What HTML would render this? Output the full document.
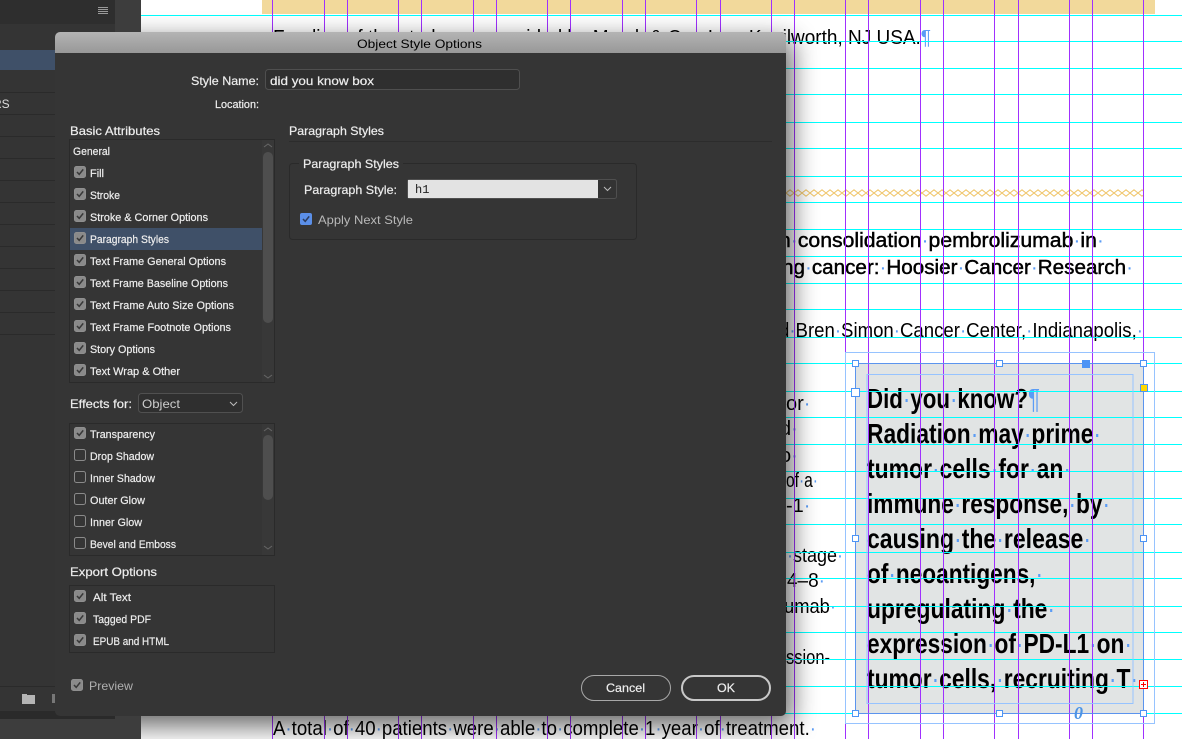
<!DOCTYPE html>
<html><head><meta charset="utf-8"><title>Object Style Options</title>
<style>
html,body{margin:0;padding:0;width:1182px;height:739px;overflow:hidden;background:#fff}
svg{display:block}
text{font-family:"Liberation Sans",sans-serif}
.d text{fill:#ededed;font-size:11px;stroke:#ededed;stroke-width:.2px}
.h{font-size:12px!important}
.dot{fill:#5b9cf5;stroke:none;font-weight:normal}
.doc{fill:#000;font-size:20px}
.hd{fill:#000;font-size:28px;font-weight:bold}
.sub{fill:#000;font-size:20px;stroke:#000;stroke-width:.45px}
</style></head><body>
<svg width="1182" height="739" viewBox="0 0 1182 739" xmlns="http://www.w3.org/2000/svg">
<defs>
<linearGradient id="tb" x1="0" y1="0" x2="0" y2="1"><stop offset="0" stop-color="#b4b4b4"/><stop offset="1" stop-color="#989898"/></linearGradient>
<filter id="bl" x="-20%" y="-20%" width="140%" height="140%"><feGaussianBlur stdDeviation="13"/></filter>
<pattern id="dm" x="786" y="189" width="8" height="8" patternUnits="userSpaceOnUse"><path d="M0 4L4 .8L8 4L4 7.2Z" fill="none" stroke="#efc468" stroke-width="1"/></pattern>
<g id="ck"><rect x=".5" y=".5" width="11" height="11" rx="2" fill="#8a8a8a" stroke="#8f8f8f"/><path d="M3 6l2.2 2.4L9.2 3.400" fill="none" stroke="#383838" stroke-width="1.5"/></g>
<g id="un"><rect x=".5" y=".5" width="11" height="11" rx="2" fill="#353535" stroke="#8a8a8a"/></g>
<clipPath id="pg"><rect x="141" y="0" width="1041" height="739"/></clipPath>
</defs>

<!-- app background -->
<rect width="1182" height="739" fill="#fff"/>
<rect x="0" y="0" width="141" height="739" fill="#3d3d3d"/>
<rect x="0" y="0" width="115" height="24" fill="#2e2e2e"/>
<rect x="0" y="24" width="115" height="688" fill="#343434"/>
<g fill="#9a9a9a"><rect x="98" y="7" width="10" height="1"/><rect x="98" y="9" width="10" height="1"/><rect x="98" y="11" width="10" height="1"/><rect x="98" y="13" width="10" height="1"/></g>
<rect x="0" y="50" width="115" height="20" fill="#3f5068"/>
<g fill="#2a2a2a"><rect y="92" width="115" height="1"/><rect y="114" width="115" height="1"/><rect y="136" width="115" height="1"/><rect y="158" width="115" height="1"/><rect y="180" width="115" height="1"/><rect y="202" width="115" height="1"/><rect y="224" width="115" height="1"/><rect y="246" width="115" height="1"/><rect y="268" width="115" height="1"/><rect y="290" width="115" height="1"/><rect y="312" width="115" height="1"/><rect y="334" width="115" height="1"/></g>
<text x="-7" y="108" font-size="12" fill="#ddd">RS</text>
<rect y="686" width="115" height="1" fill="#2a2a2a"/>
<rect y="711" width="115" height="8" fill="#2a2a2a"/>
<path d="M22 695h13v9H22z" fill="#b5b5b5"/>
<rect x="22" y="694" width="5" height="1" fill="#b5b5b5"/>
<path d="M52 694h4v9h-4z" fill="#777"/>

<!-- page -->
<rect x="262" y="0" width="893" height="14" fill="#f2d99b"/>
<g class="doc">
<text class="doc" x="273" y="44" textLength="658" lengthAdjust="spacingAndGlyphs">Funding of the study was provided by Merck &amp; Co., Inc., Kenilworth, NJ USA.<tspan fill="#5b9cf5">¶</tspan></text>
<rect x="786" y="189" width="357" height="8" fill="url(#dm)"/>
<text class="sub" x="779" y="247" textLength="325" lengthAdjust="spacingAndGlyphs">n<tspan class="dot">·</tspan>consolidation<tspan class="dot">·</tspan>pembrolizumab<tspan class="dot">·</tspan>in<tspan class="dot">·</tspan></text>
<text class="sub" x="782" y="274" textLength="351" lengthAdjust="spacingAndGlyphs">ng<tspan class="dot">·</tspan>cancer:<tspan class="dot">·</tspan>Hoosier<tspan class="dot">·</tspan>Cancer<tspan class="dot">·</tspan>Research<tspan class="dot">·</tspan></text>
<text class="doc" x="779" y="337" textLength="364" lengthAdjust="spacingAndGlyphs">d<tspan class="dot">·</tspan>Bren<tspan class="dot">·</tspan>Simon<tspan class="dot">·</tspan>Cancer<tspan class="dot">·</tspan>Center,<tspan class="dot">·</tspan>Indianapolis,<tspan class="dot">·</tspan></text>
<text class="doc" x="786" y="410">or<tspan class="dot">·</tspan></text>
<text class="doc" x="780" y="435">d<tspan class="dot">·</tspan></text>
<text class="doc" x="780" y="462">o<tspan class="dot">·</tspan></text>
<text class="doc" x="786" y="487" textLength="32" lengthAdjust="spacingAndGlyphs">of<tspan class="dot">·</tspan>a<tspan class="dot">·</tspan></text>
<text class="doc" x="786" y="512">-1<tspan class="dot">·</tspan></text>
<text class="doc" x="787" y="562" textLength="56" lengthAdjust="spacingAndGlyphs"><tspan class="dot">·</tspan>stage<tspan class="dot">·</tspan></text>
<text class="doc" x="787" y="587" textLength="38" lengthAdjust="spacingAndGlyphs">4–8<tspan class="dot">·</tspan></text>
<text class="doc" x="784" y="613" textLength="52" lengthAdjust="spacingAndGlyphs">umab<tspan class="dot">·</tspan></text>
<text class="doc" x="786" y="664" textLength="44" lengthAdjust="spacingAndGlyphs">ssion-</text>
<text class="doc" x="273" y="735" textLength="543" lengthAdjust="spacingAndGlyphs">A<tspan class="dot">·</tspan>total<tspan class="dot">·</tspan>of<tspan class="dot">·</tspan>40<tspan class="dot">·</tspan>patients<tspan class="dot">·</tspan>were<tspan class="dot">·</tspan>able<tspan class="dot">·</tspan>to<tspan class="dot">·</tspan>complete<tspan class="dot">·</tspan>1<tspan class="dot">·</tspan>year<tspan class="dot">·</tspan>of<tspan class="dot">·</tspan>treatment.<tspan class="dot">·</tspan></text>
</g>

<!-- text frame -->
<rect x="855" y="363.5" width="288" height="350" fill="#e1e4e4"/>
<text class="hd" x="867" y="408" textLength="173" lengthAdjust="spacingAndGlyphs">Did<tspan class="dot">·</tspan>you<tspan class="dot">·</tspan>know?<tspan class="dot">¶</tspan></text>
<text class="hd" x="867" y="443" textLength="234" lengthAdjust="spacingAndGlyphs">Radiation<tspan class="dot">·</tspan>may<tspan class="dot">·</tspan>prime<tspan class="dot">·</tspan></text>
<text class="hd" x="867" y="478" textLength="204" lengthAdjust="spacingAndGlyphs">tumor<tspan class="dot">·</tspan>cells<tspan class="dot">·</tspan>for<tspan class="dot">·</tspan>an<tspan class="dot">·</tspan></text>
<text class="hd" x="867" y="513" textLength="243" lengthAdjust="spacingAndGlyphs">immune<tspan class="dot">·</tspan>response,<tspan class="dot">·</tspan>by<tspan class="dot">·</tspan></text>
<text class="hd" x="867" y="548" textLength="224" lengthAdjust="spacingAndGlyphs">causing<tspan class="dot">·</tspan>the<tspan class="dot">·</tspan>release<tspan class="dot">·</tspan></text>
<text class="hd" x="867" y="583" textLength="176" lengthAdjust="spacingAndGlyphs">of<tspan class="dot">·</tspan>neoantigens,<tspan class="dot">·</tspan></text>
<text class="hd" x="867" y="618" textLength="188" lengthAdjust="spacingAndGlyphs">upregulating<tspan class="dot">·</tspan>the<tspan class="dot">·</tspan></text>
<text class="hd" x="867" y="653" textLength="265" lengthAdjust="spacingAndGlyphs">expression<tspan class="dot">·</tspan>of<tspan class="dot">·</tspan>PD-L1<tspan class="dot">·</tspan>on<tspan class="dot">·</tspan></text>
<text class="hd" x="867" y="688" textLength="271" lengthAdjust="spacingAndGlyphs">tumor<tspan class="dot">·</tspan>cells,<tspan class="dot">·</tspan>recruiting<tspan class="dot">·</tspan>T<tspan class="dot">·</tspan></text>

<!-- guides -->
<g clip-path="url(#pg)" fill="#0ff">
<rect x="141" y="15" width="1041" height="1"/><rect x="141" y="41" width="1041" height="1"/><rect x="141" y="68" width="1041" height="1"/><rect x="141" y="94" width="1041" height="1"/><rect x="141" y="122" width="1041" height="1"/><rect x="141" y="148" width="1041" height="1"/><rect x="141" y="176" width="1041" height="1"/><rect x="141" y="202" width="1041" height="1"/><rect x="141" y="229" width="1041" height="1"/><rect x="141" y="256" width="1041" height="1"/><rect x="141" y="283" width="1041" height="1"/><rect x="141" y="309" width="1041" height="1"/><rect x="141" y="337" width="1041" height="1"/><rect x="141" y="363" width="1041" height="1"/><rect x="141" y="391" width="1041" height="1"/><rect x="141" y="417" width="1041" height="1"/><rect x="141" y="444" width="1041" height="1"/><rect x="141" y="471" width="1041" height="1"/><rect x="141" y="498" width="1041" height="1"/><rect x="141" y="524" width="1041" height="1"/><rect x="141" y="552" width="1041" height="1"/><rect x="141" y="578" width="1041" height="1"/><rect x="141" y="606" width="1041" height="1"/><rect x="141" y="632" width="1041" height="1"/><rect x="141" y="659" width="1041" height="1"/><rect x="141" y="686" width="1041" height="1"/><rect x="141" y="713" width="1041" height="1"/>
</g>
<g fill="#a030ff">
<rect x="272" y="0" width="1" height="739"/><rect x="324" y="0" width="1" height="739"/><rect x="347" y="0" width="1" height="739"/><rect x="398" y="0" width="1" height="739"/><rect x="421" y="0" width="1" height="739"/><rect x="473" y="0" width="1" height="739"/><rect x="496" y="0" width="1" height="739"/><rect x="547" y="0" width="1" height="739"/><rect x="570" y="0" width="1" height="739"/><rect x="622" y="0" width="1" height="739"/><rect x="645" y="0" width="1" height="739"/><rect x="696" y="0" width="1" height="739"/><rect x="720" y="0" width="1" height="739"/><rect x="771" y="0" width="1" height="739"/><rect x="794" y="0" width="1" height="739"/><rect x="845" y="0" width="1" height="739"/><rect x="868" y="0" width="1" height="739"/><rect x="920" y="0" width="1" height="739"/><rect x="943" y="0" width="1" height="739"/><rect x="994" y="0" width="1" height="739"/><rect x="1018" y="0" width="1" height="739"/><rect x="1069" y="0" width="1" height="739"/><rect x="1092" y="0" width="1" height="739"/><rect x="1143" y="0" width="1" height="739"/>
</g>

<!-- selection -->
<g fill="none">
<rect x="845.5" y="352.5" width="309" height="371" stroke="#96c3ff"/>
<rect x="855.5" y="363.5" width="288" height="350" stroke="#5b94ee"/>
<rect x="867" y="374.5" width="266" height="329" stroke="#96c3ff"/>
</g>
<g fill="#fff" stroke="#4d94f5">
<rect x="852.5" y="360.5" width="6" height="6"/><rect x="996.5" y="360.5" width="6" height="6"/><rect x="1140.5" y="360.5" width="6" height="6"/>
<rect x="851.5" y="388.5" width="8" height="8"/>
<rect x="852.5" y="535.5" width="6" height="6"/><rect x="1140.5" y="535.5" width="6" height="6"/>
<rect x="852.5" y="710.5" width="6" height="6"/><rect x="996.5" y="710.5" width="6" height="6"/><rect x="1140.5" y="710.5" width="6" height="6"/>
</g>
<rect x="1082" y="360" width="8" height="8" fill="#4d94f5"/>
<rect x="1140.5" y="384.5" width="7" height="7" fill="#ffd800" stroke="#4d94f5"/>
<rect x="1139.5" y="680.5" width="8" height="8" fill="#fff" stroke="#f00"/>
<path d="M1141 684.5h5M1143.5 682v5" stroke="#f00" stroke-width="1"/>
<text x="1074" y="719" font-size="18" font-weight="bold" font-style="italic" fill="#4d94e5" style="font-family:'Liberation Serif',serif">0</text>

<!-- dialog shadow -->
<g clip-path="url(#pg)"><rect x="60" y="40" width="732" height="686" fill="#000" opacity=".6" filter="url(#bl)"/></g>

<!-- dialog -->
<rect x="55" y="32" width="731" height="684" rx="5" fill="#353535"/>
<path d="M55 53V37a5 5 0 0 1 5-5H781a5 5 0 0 1 5 5V53Z" fill="url(#tb)"/>
<text x="357" y="48" font-size="12" fill="#000" textLength="125" lengthAdjust="spacingAndGlyphs">Object Style Options</text>

<g class="d">
<text class="h" x="191" y="85" textLength="68" lengthAdjust="spacingAndGlyphs">Style Name:</text>
<rect x="265.500" y="69.500" width="254" height="20" rx="3" fill="#2f2f2f" stroke="#4f4f4f"/>
<text class="h" x="270" y="85" textLength="104" lengthAdjust="spacingAndGlyphs">did you know box</text>
<text x="215" y="108" textLength="44" lengthAdjust="spacingAndGlyphs">Location:</text>

<text class="h" x="70" y="135" textLength="90" lengthAdjust="spacingAndGlyphs">Basic Attributes</text>
<rect x="69.500" y="139.500" width="205" height="243" fill="#353535" stroke="#2a2a2a"/>
<rect x="70" y="228" width="192" height="22" fill="#3f5068"/>
<rect x="262" y="140" width="12" height="242" fill="#383838"/>
<rect x="263" y="152" width="10" height="171" rx="5" fill="#4e4e4e"/>
<path d="M264 147l4-3 4 3M264 375l4 3 4-3" fill="none" stroke="#666"/>
<text x="73" y="155" textLength="37" lengthAdjust="spacingAndGlyphs">General</text>
<use href="#ck" x="74" y="166"/><text x="90" y="177" textLength="14" lengthAdjust="spacingAndGlyphs">Fill</text>
<use href="#ck" x="74" y="188"/><text x="90" y="199" textLength="30" lengthAdjust="spacingAndGlyphs">Stroke</text>
<use href="#ck" x="74" y="210"/><text x="90" y="221" textLength="118" lengthAdjust="spacingAndGlyphs">Stroke &amp; Corner Options</text>
<use href="#ck" x="74" y="232"/><text x="90" y="243" textLength="79" lengthAdjust="spacingAndGlyphs">Paragraph Styles</text>
<use href="#ck" x="74" y="254"/><text x="90" y="265" textLength="136" lengthAdjust="spacingAndGlyphs">Text Frame General Options</text>
<use href="#ck" x="74" y="276"/><text x="90" y="287" textLength="138" lengthAdjust="spacingAndGlyphs">Text Frame Baseline Options</text>
<use href="#ck" x="74" y="298"/><text x="90" y="309" textLength="144" lengthAdjust="spacingAndGlyphs">Text Frame Auto Size Options</text>
<use href="#ck" x="74" y="320"/><text x="90" y="331" textLength="141" lengthAdjust="spacingAndGlyphs">Text Frame Footnote Options</text>
<use href="#ck" x="74" y="342"/><text x="90" y="353" textLength="65" lengthAdjust="spacingAndGlyphs">Story Options</text>
<use href="#ck" x="74" y="364"/><text x="90" y="375" textLength="90" lengthAdjust="spacingAndGlyphs">Text Wrap &amp; Other</text>

<text class="h" x="70" y="408" textLength="62" lengthAdjust="spacingAndGlyphs">Effects for:</text>
<rect x="138.500" y="393.500" width="104" height="19" rx="3" fill="#2f2f2f" stroke="#505050"/>
<text class="h" x="142" y="408" textLength="38" lengthAdjust="spacingAndGlyphs" style="fill:#ccc;stroke:none">Object</text>
<path d="M230 402l3.500 3.500L237 402" fill="none" stroke="#bbb"/>

<rect x="69.500" y="423.500" width="205" height="132" fill="#353535" stroke="#2a2a2a"/>
<rect x="262" y="424" width="12" height="131" fill="#383838"/>
<rect x="263" y="435" width="10" height="65" rx="5" fill="#4e4e4e"/>
<path d="M264 431l4-3 4 3M264 546l4 3 4-3" fill="none" stroke="#666"/>
<use href="#ck" x="74" y="427"/><text x="90" y="438" textLength="65" lengthAdjust="spacingAndGlyphs">Transparency</text>
<use href="#un" x="74" y="449"/><text x="90" y="460" textLength="64" lengthAdjust="spacingAndGlyphs">Drop Shadow</text>
<use href="#un" x="74" y="471"/><text x="90" y="482" textLength="65" lengthAdjust="spacingAndGlyphs">Inner Shadow</text>
<use href="#un" x="74" y="493"/><text x="90" y="504" textLength="55" lengthAdjust="spacingAndGlyphs">Outer Glow</text>
<use href="#un" x="74" y="515"/><text x="90" y="526" textLength="52" lengthAdjust="spacingAndGlyphs">Inner Glow</text>
<use href="#un" x="74" y="537"/><text x="90" y="548" textLength="86" lengthAdjust="spacingAndGlyphs">Bevel and Emboss</text>

<text class="h" x="70" y="576" textLength="87" lengthAdjust="spacingAndGlyphs">Export Options</text>
<rect x="69.500" y="585.500" width="205" height="67" fill="#353535" stroke="#2a2a2a"/>
<use href="#ck" x="74" y="590"/><text x="93" y="601" textLength="38" lengthAdjust="spacingAndGlyphs">Alt Text</text>
<use href="#ck" x="74" y="612"/><text x="93" y="623" textLength="58" lengthAdjust="spacingAndGlyphs">Tagged PDF</text>
<use href="#ck" x="74" y="634"/><text x="93" y="645" textLength="76" lengthAdjust="spacingAndGlyphs">EPUB and HTML</text>

<use href="#ck" x="71" y="679"/><text class="h" x="89" y="690" textLength="44" lengthAdjust="spacingAndGlyphs" style="fill:#b0b0b0;stroke:none">Preview</text>

<text class="h" x="289" y="135" textLength="95" lengthAdjust="spacingAndGlyphs">Paragraph Styles</text>
<rect x="289" y="141" width="483" height="1" fill="#2c2c2c"/>
<rect x="289.500" y="163.500" width="347" height="76" rx="3" fill="none" stroke="#2a2a2a"/>
<rect x="299" y="160" width="104" height="8" fill="#353535"/>
<text class="h" x="303" y="168" textLength="96" lengthAdjust="spacingAndGlyphs">Paragraph Styles</text>
<text class="h" x="304" y="194" textLength="93" lengthAdjust="spacingAndGlyphs">Paragraph Style:</text>
<rect x="407.500" y="179.500" width="209" height="19" rx="2" fill="#333" stroke="#4f4f4f"/>
<rect x="408" y="180" width="190" height="18" fill="#e3e3e3"/>
<text x="415" y="193" style="font-size:12px;fill:#222;stroke:none;font-family:'Liberation Mono',monospace">h1</text>
<path d="M604 187l3.500 3.500L611 187" fill="none" stroke="#bbb"/>
<rect x="300" y="213" width="12" height="12" rx="2" fill="#5b8fe8"/>
<path d="M303 219l2.200 2.400L309.200 216.400" fill="none" stroke="#2c3c5c" stroke-width="1.500"/>
<text class="h" x="318" y="224" textLength="95" lengthAdjust="spacingAndGlyphs" style="fill:#b8b8b8;stroke:none">Apply Next Style</text>

<rect x="581.500" y="675.500" width="89" height="25" rx="12.500" fill="none" stroke="#a8a8a8"/>
<text class="h" x="606" y="692" textLength="39" lengthAdjust="spacingAndGlyphs">Cancel</text>
<rect x="682" y="676" width="88" height="24" rx="12" fill="none" stroke="#c8c8c8" stroke-width="2"/>
<text class="h" x="717" y="692" textLength="18" lengthAdjust="spacingAndGlyphs">OK</text>
</g>
</svg>
</body></html>
